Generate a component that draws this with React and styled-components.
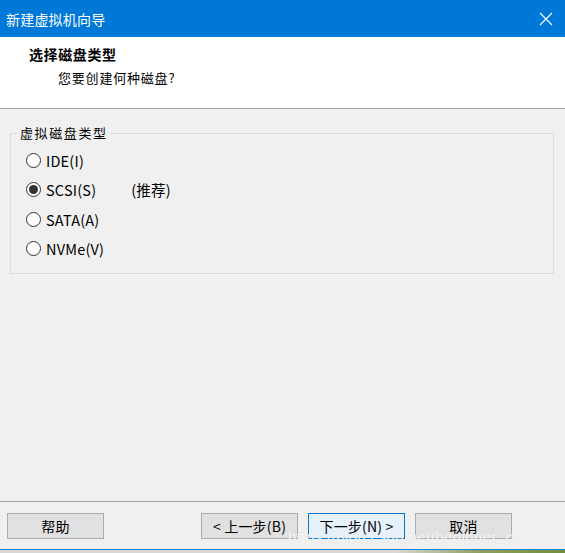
import styled, { createGlobalStyle } from "styled-components";

const GlobalStyle = createGlobalStyle`
  html, body {
    margin: 0;
    padding: 0;
    width: 565px;
    height: 553px;
    overflow: hidden;
    background: #dcdcdc;
  }
  * {
    box-sizing: border-box;
  }
`;

const font = `"Microsoft YaHei UI", "Noto Sans CJK SC", "Noto Sans", sans-serif`;

const Window = styled.div`
  position: relative;
  width: 565px;
  height: 550px;
  display: flex;
  flex-direction: column;
  background: #f0f0f0;
  border-bottom: 1px solid #1883d7;
  font-family: ${font};
  color: #000;
`;

const TitleBar = styled.div`
  height: 37px;
  background: #0078d7;
  display: flex;
  align-items: center;
  justify-content: space-between;
  padding: 0 12px 0 6px;
  color: #fff;
  font-size: 14px;
  letter-spacing: 0.2px;
  flex-shrink: 0;
`;

const TitleText = styled.span`
  line-height: 1;
  margin-top: 1px;
`;

const CloseIcon = styled.svg`
  width: 14px;
  height: 14px;
  display: block;
`;

const Header = styled.div`
  height: 72px;
  background: #fff;
  border-bottom: 1px solid #a0a0a0;
  padding: 9px 0 0 29px;
  flex-shrink: 0;
`;

const HeaderTitle = styled.div`
  font-size: 14px;
  font-weight: bold;
  letter-spacing: 0.6px;
  line-height: 16px;
`;

const HeaderSub = styled.div`
  font-size: 13px;
  letter-spacing: 0.8px;
  line-height: 16px;
  margin: 8px 0 0 29px;
`;

const Content = styled.div`
  flex: 1;
  padding: 16px 11px 0 10px;
`;

const Group = styled.fieldset`
  margin: 0;
  height: 149px;
  border: 1px solid #dcdcdc;
  padding: 11px 0 0 7px;
`;

const Legend = styled.legend`
  padding: 0 2px;
  margin: 0;
  font-size: 13px;
  letter-spacing: 1.6px;
  line-height: 16px;
`;

const Options = styled.div`
  display: flex;
  flex-direction: column;
  gap: 13.5px;
  margin-left: 8px;
`;

const Option = styled.label`
  display: flex;
  align-items: center;
  height: 16px;
  font-size: 14.5px;
  letter-spacing: 0.2px;
`;

const Radio = styled.span`
  width: 15px;
  height: 15px;
  border-radius: 50%;
  border: 1px solid #333;
  background: #fff;
  display: flex;
  align-items: center;
  justify-content: center;
  margin-right: 5px;
  flex-shrink: 0;
  &::after {
    content: "";
    width: 9px;
    height: 9px;
    border-radius: 50%;
    background: ${(p) => (p.$checked ? "#333" : "transparent")};
  }
`;

const Hint = styled.span`
  margin-left: 35px;
`;

const Footer = styled.div`
  height: 48px;
  border-top: 1px solid #a0a0a0;
  display: flex;
  align-items: flex-start;
  padding: 11px 0 0 7px;
  flex-shrink: 0;
`;

const Button = styled.button`
  width: 97px;
  height: 26px;
  margin-left: ${(p) => p.$gap || 0}px;
  border: 1px solid ${(p) => (p.$default ? "#0078d7" : "#adadad")};
  background: ${(p) => (p.$default ? "#e5f1fb" : "#e1e1e1")};
  font-family: ${font};
  font-size: 14px;
  letter-spacing: 0.2px;
  color: #000;
  padding: 0;
  display: flex;
  align-items: center;
  justify-content: center;
`;

const Watermark = styled.div`
  position: absolute;
  left: 288px;
  top: 528px;
  font-family: "Liberation Sans", Arial, sans-serif;
  font-size: 15px;
  letter-spacing: 0.4px;
  color: rgba(255, 255, 255, 0.75);
  text-shadow: 0 0 1px rgba(200, 200, 200, 0.6);
  pointer-events: none;
  white-space: nowrap;
`;

const Desktop = styled.div`
  height: 3px;
  background: linear-gradient(90deg, #d8d8d8 0%, #d8d8d8 70%, #8aa060 85%, #6f8f3f 100%);
`;

const options = [
  { label: "IDE(I)", checked: false },
  { label: "SCSI(S)", checked: true, hint: "(推荐)" },
  { label: "SATA(A)", checked: false },
  { label: "NVMe(V)", checked: false },
];

export default function App() {
  return (
    <>
      <GlobalStyle />
      <Window>
        <TitleBar>
          <TitleText>新建虚拟机向导</TitleText>
          <CloseIcon viewBox="0 0 14 14">
            <path d="M1 1 L13 13 M13 1 L1 13" stroke="#fff" strokeWidth="1.1" fill="none" />
          </CloseIcon>
        </TitleBar>
        <Header>
          <HeaderTitle>选择磁盘类型</HeaderTitle>
          <HeaderSub>您要创建何种磁盘?</HeaderSub>
        </Header>
        <Content>
          <Group>
            <Legend>虚拟磁盘类型</Legend>
            <Options>
              {options.map((o) => (
                <Option key={o.label}>
                  <Radio $checked={o.checked} />
                  {o.label}
                  {o.hint && <Hint>{o.hint}</Hint>}
                </Option>
              ))}
            </Options>
          </Group>
        </Content>
        <Footer>
          <Button>帮助</Button>
          <Button $gap={97}>&lt; 上一步(B)</Button>
          <Button $gap={10} $default>
            下一步(N) &gt;
          </Button>
          <Button $gap={10}>取消</Button>
        </Footer>
        <Watermark>https://blog.csdn.net/beginner_c_P_P</Watermark>
      </Window>
      <Desktop />
    </>
  );
}
